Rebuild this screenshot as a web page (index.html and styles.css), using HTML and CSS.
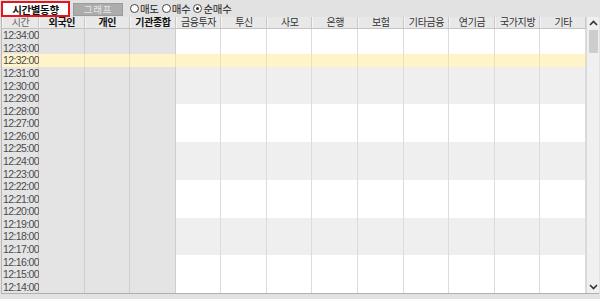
FILE: index.html
```html
<!DOCTYPE html>
<html lang="ko">
<head>
  <meta charset="UTF-8" />
  <title>시간별동향</title>
  <link rel="stylesheet" href="styles.css">
</head>
<body>
  <div class="toolbar">
    <div class="tab active">시간별동향</div>
    <div class="tab-btn">그래프</div>
    <div class="radios">
      <span class="radio"><i></i>매도</span>
      <span class="radio"><i></i>매수</span>
      <span class="radio on"><i></i>순매수</span>
    </div>
  </div>

  <div class="panel">
    <div class="grid-area">
      <div class="row head">
        <div class="cell time">시간</div>
        <div class="cell strong">외국인</div>
        <div class="cell strong">개인</div>
        <div class="cell strong">기관종합</div>
        <div class="cell">금융투자</div>
        <div class="cell">투신</div>
        <div class="cell">사모</div>
        <div class="cell">은행</div>
        <div class="cell">보험</div>
        <div class="cell">기타금융</div>
        <div class="cell">연기금</div>
        <div class="cell">국가지방</div>
        <div class="cell">기타</div>
      </div>
      <div class="rows" id="rows"></div>
    </div>
    <div class="scrollbar">
      <div class="arrow up">
        <svg width="9" height="6" viewBox="0 0 9 6"><path d="M1 5 L4.5 1.5 L8 5" fill="none" stroke="#333" stroke-width="1.6"/></svg>
      </div>
      <div class="track"><div class="thumb"></div></div>
      <div class="arrow down">
        <svg width="9" height="6" viewBox="0 0 9 6"><path d="M1 1 L4.5 4.5 L8 1" fill="none" stroke="#333" stroke-width="1.6"/></svg>
      </div>
    </div>
  </div>
  <div class="footer"></div>

  <script>
    const rows = document.getElementById("rows");
    for (let i = 0; i < 21; i++) {
      const min = 34 - i;
      const row = document.createElement("div");
      let cls = "row";
      if (i === 2) cls += " current";
      else if (Math.floor(i / 3) % 2 === 1) cls += " band";
      row.className = cls;
      let html = `<div class="cell time">12:${String(min).padStart(2, "0")}:00</div>`;
      for (let c = 0; c < 12; c++) {
        html += `<div class="cell${c < 3 ? " fixed" : ""}"></div>`;
      }
      row.innerHTML = html;
      rows.appendChild(row);
    }
  </script>
</body>
</html>
```

FILE: styles.css
```css
* {
  margin: 0;
  padding: 0;
  box-sizing: border-box;
}
body {
  width: 600px;
  height: 299px;
  overflow: hidden;
  background: #e2e2e2;
  font-family: "Liberation Sans", "Noto Sans CJK KR", sans-serif;
  font-size: 10px;
  color: #333;
}
.toolbar {
  height: 17px;
  display: flex;
  align-items: center;
  padding-left: 1px;
}
.tab {
  width: 69px;
  height: 16px;
  margin-top: 1px;
  border: 2px solid #e8141c;
  background: #fff;
  color: #111;
  font-weight: bold;
  font-size: 10.5px;
  letter-spacing: -0.4px;
  display: flex;
  align-items: center;
  justify-content: center;
}
.tab-btn {
  width: 50px;
  height: 13px;
  margin-left: 3px;
  margin-top: 1px;
  background: #acacac;
  border: 1px solid #9c9c9c;
  color: #e8e8e8;
  font-size: 9.5px;
  display: flex;
  align-items: center;
  justify-content: center;
  letter-spacing: 0.8px;
}
.radios {
  display: flex;
  margin-left: 7px;
  gap: 3px;
  color: #222;
  font-size: 10.5px;
}
.radio {
  display: flex;
  align-items: center;
  gap: 1px;
  letter-spacing: -0.3px;
}
.radio i {
  width: 9px;
  height: 9px;
  border: 1px solid #444;
  border-radius: 50%;
  background: #fff;
  position: relative;
}
.radio.on i::after {
  content: "";
  position: absolute;
  left: 2px;
  top: 2px;
  width: 3px;
  height: 3px;
  border-radius: 50%;
  background: #222;
}
.panel {
  display: flex;
  margin-left: 1px;
  width: 598px;
  height: 277px;
  border-left: 1px solid #b8b8b8;
  border-bottom: 1px solid #b0b0b0;
  background: #fff;
}
.grid-area {
  width: 584px;
  display: flex;
  flex-direction: column;
}
.row {
  display: grid;
  grid-template-columns: 37px repeat(12, 1fr);
}
.head {
  height: 12px;
  background: #e8e8e8;
  border-bottom: 1px solid #c4c4c4;
}
.head .cell {
  border-right: 1px solid #c8c8c8;
  border-left: 1px solid #f6f6f6;
  text-align: center;
  line-height: 11px;
  font-size: 10px;
  color: #333;
  letter-spacing: -0.4px;
}
.head .cell.time {
  color: #666;
  font-weight: normal;
}
.head .cell.strong {
  font-weight: bold;
  color: #111;
}
.rows {
  flex: 1;
  display: grid;
  grid-template-rows: repeat(21, 1fr);
}
.rows .cell {
  border-right: 1px solid #dcdcdc;
}
.rows .cell.time {
  background: #e4e4e4;
  border-right: 1px solid #cfcfcf;
  font-size: 10.5px;
  letter-spacing: -0.6px;
  color: #4a4a4a;
  padding-left: 1px;
  display: flex;
  align-items: center;
}
.rows .cell.fixed {
  background: #e4e4e4;
  border-right: 1px solid #cfcfcf;
}
.row.band .cell:not(.fixed):not(.time) {
  background: #efefef;
}
.row.current .cell,
.row.current .cell.fixed,
.row.current .cell.time {
  background: #fff3c9;
  border-right-color: #ece0b4;
}
.scrollbar {
  width: 13px;
  display: flex;
  flex-direction: column;
  background: #f0f0f0;
  border-left: 1px solid #d8d8d8;
}
.arrow {
  height: 12px;
  display: flex;
  align-items: center;
  justify-content: center;
}
.track {
  flex: 1;
  padding: 1px 1px 0 2px;
}
.thumb {
  height: 23px;
  background: #cdcdcd;
}
.footer {
  height: 5px;
}
```
